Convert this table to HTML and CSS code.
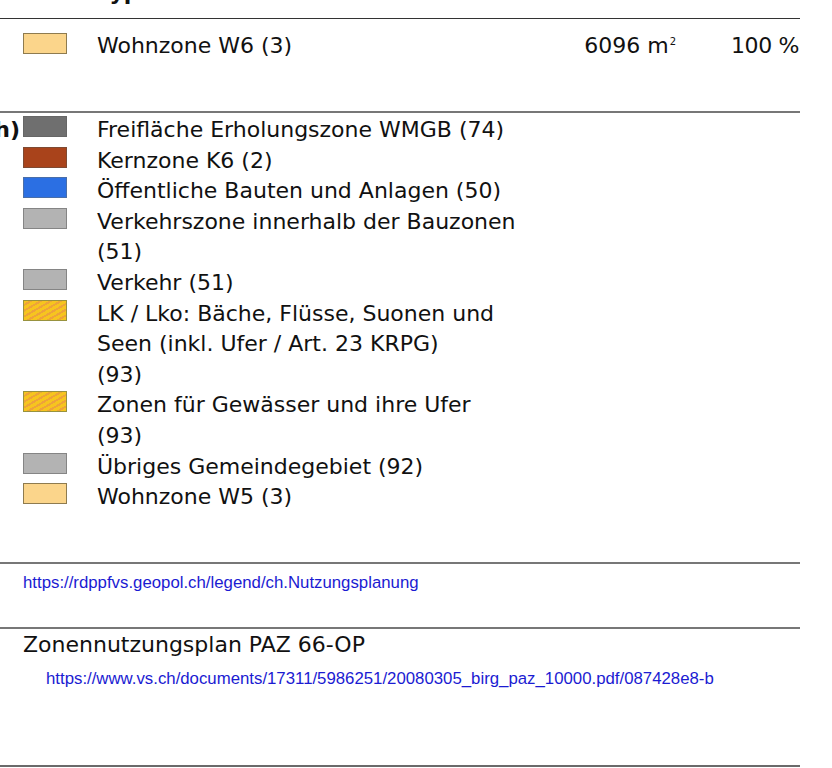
FILE: index.html
```html
<!DOCTYPE html>
<html lang="de">
<head>
<meta charset="utf-8">
<title>Nutzungsplanung</title>
<link rel="stylesheet" href="styles.css">
</head>
<body>
<div class="page">
  <div class="doc">
    <div class="thead">
      <div class="c-sw"></div>
      <div class="c-typ">Typ</div>
      <div class="c-area">Fläche</div>
      <div class="c-share head-share">Anteil</div>
    </div>
    <div class="trow">
      <div class="c-sw"><span class="sw sw-wohn"></span></div>
      <div class="c-typ">Wohnzone W6 (3)</div>
      <div class="c-area">6096 m<sup>2</sup></div>
      <div class="c-share">100 %</div>
    </div>

    <div class="legend">
      <div class="lg-label"><span>Übrige Legende (im sichtbaren Bereich)</span></div>
      <ul class="lg-list">
        <li><span class="sw sw-frei"></span><span class="lg-text">Freifläche Erholungszone WMGB (74)</span></li>
        <li><span class="sw sw-kern"></span><span class="lg-text">Kernzone K6 (2)</span></li>
        <li><span class="sw sw-oeff"></span><span class="lg-text">Öffentliche Bauten und Anlagen (50)</span></li>
        <li><span class="sw sw-grau"></span><span class="lg-text">Verkehrszone innerhalb der Bauzonen (51)</span></li>
        <li><span class="sw sw-grau"></span><span class="lg-text">Verkehr (51)</span></li>
        <li><span class="sw sw-hatch"></span><span class="lg-text">LK / Lko: Bäche, Flüsse, Suonen und Seen (inkl. Ufer / Art. 23 KRPG)<br>(93)</span></li>
        <li><span class="sw sw-hatch"></span><span class="lg-text">Zonen für Gewässer und ihre Ufer (93)</span></li>
        <li><span class="sw sw-grau"></span><span class="lg-text">Übriges Gemeindegebiet (92)</span></li>
        <li><span class="sw sw-wohn"></span><span class="lg-text">Wohnzone W5 (3)</span></li>
      </ul>
    </div>

    <div class="sec-link">
      <a class="url" href="#">https://rdppfvs.geopol.ch/legend/ch.Nutzungsplanung</a>
    </div>

    <div class="sec-doc">
      <div class="doc-title">Zonennutzungsplan PAZ 66-OP</div>
      <a class="url url-indent" href="#">https://www.vs.ch/documents/17311/5986251/20080305_birg_paz_10000.pdf/087428e8-b</a>
    </div>
  </div>
</div>
</body>
</html>
```

FILE: styles.css
```css
html, body {
  margin: 0;
  padding: 0;
  background: #fff;
}

body {
  font-family: "DejaVu Sans", Verdana, sans-serif;
  font-size: 22px;
  color: #111;
}

.page {
  width: 800px;
  height: 768px;
  overflow: hidden;
}

.doc {
  width: 800px;
}

/* table head + row */
.thead,
.trow {
  display: grid;
  grid-template-columns: 23px 44px 30px 420px 1fr 124px;
  line-height: 30px;
}

.thead > .c-sw,
.trow > .c-sw { grid-column: 2; }
.thead > .c-typ,
.trow > .c-typ { grid-column: 4; white-space: nowrap; }
.thead > .c-area,
.trow > .c-area { grid-column: 5; text-align: right; white-space: nowrap; }
.thead > .c-share,
.trow > .c-share { grid-column: 6; padding-left: 55px; white-space: nowrap; }

.thead {
  margin-top: -22px;
  padding-bottom: 10px;
  border-bottom: 1px solid #333;
  font-weight: bold;
}

.thead > .head-share {
  padding-left: 66px;
}

.trow {
  padding-top: 12px;
  padding-bottom: 50px;
  border-bottom: 2px solid #777;
}

.trow > .c-share {
  letter-spacing: -0.4px;
}

.trow .sw {
  margin-top: 2px;
}

.c-area sup {
  font-size: 10px;
  vertical-align: 8px;
  line-height: 0;
  margin-left: 1px;
}

/* swatches */
.sw {
  display: block;
  box-sizing: border-box;
  width: 44px;
  height: 21px;
  border: 1px solid #888;
}
.sw-wohn  { background: #fbd58b; border-color: #8e7b4f; }
.sw-frei  { background: #6f6f6f; border-color: #666; }
.sw-kern  { background: #a9431b; border-color: #7e4a33; }
.sw-oeff  { background: #2b6fe3; border-color: #4a6ea8; }
.sw-grau  { background: #b3b3b3; border-color: #858585; }
.sw-hatch {
  border-color: #98923f;
  background: repeating-linear-gradient(
    -30deg,
    #f6c51e 0px,
    #f6c51e 3px,
    #eea33a 3px,
    #eea33a 5px
  );
}

/* legend */
.legend {
  display: grid;
  grid-template-columns: 23px 1fr;
  padding-top: 2px;
  padding-bottom: 49px;
  border-bottom: 2px solid #777;
  line-height: 30.6px;
}

.lg-label {
  display: flex;
  justify-content: flex-end;
  padding-right: 3px;
  font-weight: bold;
  white-space: nowrap;
  min-width: 0;
}

.lg-list {
  list-style: none;
  margin: 0;
  padding: 0;
}

.lg-list li {
  display: grid;
  grid-template-columns: 44px 421px;
  column-gap: 30px;
  align-items: start;
}

.lg-list .sw {
  margin-top: 1px;
}

/* links */
.url {
  display: block;
  font-family: "Liberation Sans", Arial, sans-serif;
  font-size: 16.8px;
  line-height: 20px;
  color: #1b1bd2;
  text-decoration: none;
  white-space: nowrap;
}

.sec-link {
  padding: 9px 0 34px 23px;
  border-bottom: 2px solid #777;
}

.sec-doc {
  padding: 1px 0 76px 23px;
  border-bottom: 2px solid #6a6a6a;
}

.doc-title {
  line-height: 30.6px;
}

.url-indent {
  margin-top: 9px;
  padding-left: 23px;
}
```
